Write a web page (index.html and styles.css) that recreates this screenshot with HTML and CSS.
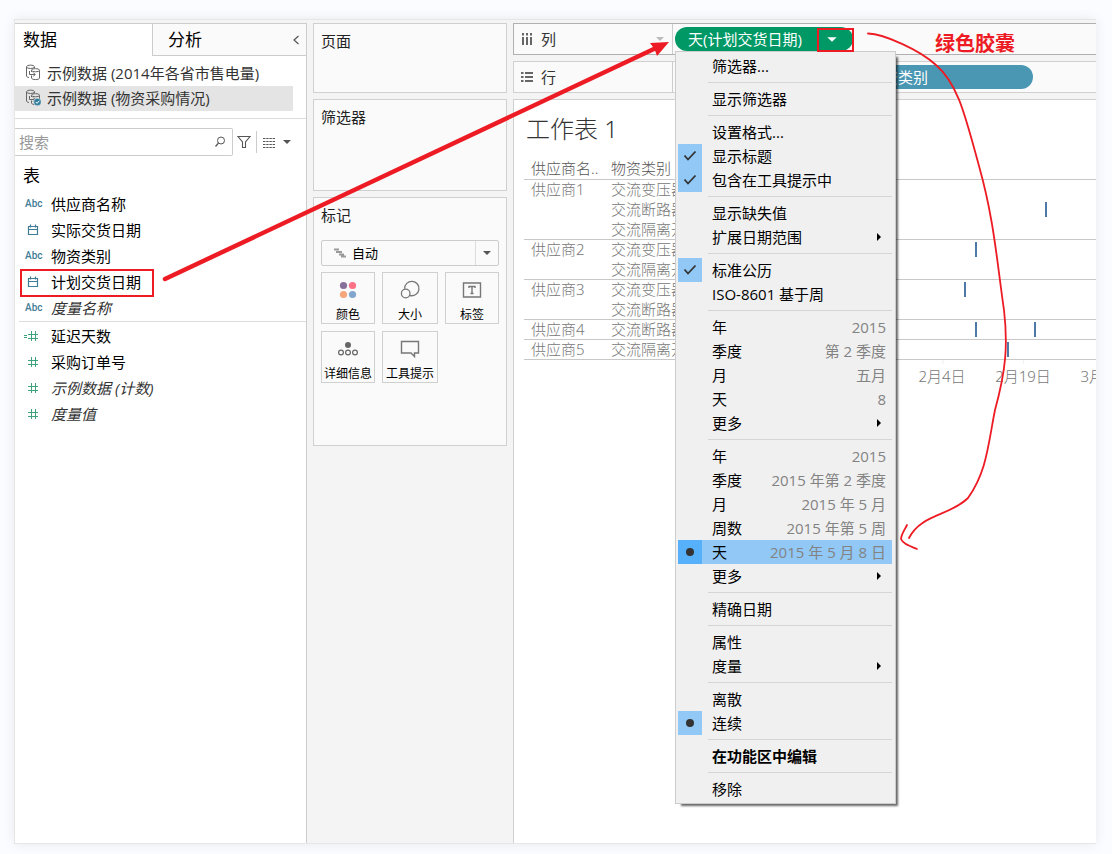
FILE: index.html
```html
<!DOCTYPE html>
<html lang="zh-CN">
<head>
<meta charset="utf-8">
<meta name="viewport" content="width=device-width, initial-scale=1">
<title>工作表 1</title>
<link rel="stylesheet" href="styles.css">
</head>
<body>
<svg class="sprite" aria-hidden="true">
  <symbol id="cal" viewBox="0 0 16 16"><path d="M3.500 4.500h9v8h-9zM3 7.500h10M5.500 2.500v3M10.500 2.500v3" fill="none" stroke="#3f7d97" stroke-width="1.200"/></symbol>
  <symbol id="hash" viewBox="0 0 16 16"><path d="M3 6.500h10M3 10.500h10M6.500 3v10M10.500 3v10" fill="none" stroke="#3fa27c"/></symbol>
  <symbol id="db" viewBox="0 0 16 17">
    <g fill="none" stroke="#666">
      <path d="M4 13.500C2.500 13.200 1.500 12.700 1.500 12V3M9.500 3v1"/>
      <ellipse cx="5.500" cy="2.800" rx="4" ry="1.700"/>
      <path d="M6.500 11.500V14c0 .9 1.800 1.600 4 1.600s4-.7 4-1.600V6.500M6.500 6.500v1.500"/>
      <ellipse cx="10.500" cy="6.200" rx="4" ry="1.600"/>
      <path d="M4.500 7v3.500h5.500M8.200 8.500l2 2-2 2"/>
    </g>
  </symbol>
  <symbol id="check" viewBox="0 0 24 24"><path d="M6.500 11.500l3.500 4 7.500-8" fill="none" stroke="#333" stroke-width="1.800"/></symbol>
  <symbol id="dot" viewBox="0 0 24 24"><circle cx="12" cy="12" r="4" fill="#333"/></symbol>
  <symbol id="sub" viewBox="0 0 6 10"><path d="M1 1l4 4-4 4z"/></symbol>
  <symbol id="down" viewBox="0 0 10 6"><path d="M1 1h8L5 5z"/></symbol>
</svg>

<div class="app">
  <aside class="data-pane">
    <div class="tabs" role="tablist">
      <button class="tab active" role="tab" aria-selected="true">数据</button>
      <button class="tab" role="tab" aria-selected="false">分析
        <svg class="collapse" viewBox="0 0 8 10"><path d="M6.500 1L2 5l4.500 4" fill="none" stroke="#555" stroke-width="1.200"/></svg>
      </button>
    </div>
    <div class="sources">
      <button class="source"><svg class="source-icon"><use href="#db"/></svg>示例数据 (2014年各省市售电量)</button>
      <button class="source selected"><svg class="source-icon" viewBox="0 0 16 17"><use href="#db" width="16" height="17"/><circle cx="12.500" cy="13" r="3.800" fill="#337f9f" stroke="#e4e4e4" stroke-width=".6"/><path d="M10.800 13l1.300 1.300 2.200-2.600" stroke="#fff" fill="none"/></svg>示例数据 (物资采购情况)</button>
    </div>
    <div class="search-row">
      <label class="search">
        <input class="search-input" type="text" placeholder="搜索" aria-label="搜索">
        <svg class="search-icon" viewBox="0 0 12 12"><circle cx="7" cy="4.500" r="3.500" fill="none" stroke="#555"/><path d="M4.500 7L1.500 10.500" stroke="#555" stroke-width="1.200"/></svg>
      </label>
      <button class="tool filter" aria-label="筛选"><svg viewBox="0 0 14 14"><path d="M1 1.500h12L8.500 7v5.500h-3V7z" fill="none" stroke="#555" stroke-width="1.100"/></svg></button>
      <button class="tool view" aria-label="视图">
        <svg class="grid-icon" viewBox="0 0 12 11"><path d="M0 1.500h12M0 4.500h12M0 7.500h12M0 10.500h12" stroke="#555" stroke-dasharray="2.400 .8"/></svg>
        <svg class="caret"><use href="#down"/></svg>
      </button>
    </div>
    <h2 class="group-title">表</h2>
    <ul class="fields">
      <li class="field"><span class="abc">Abc</span>供应商名称</li>
      <li class="field"><svg class="field-icon"><use href="#cal"/></svg>实际交货日期</li>
      <li class="field"><span class="abc">Abc</span>物资类别</li>
      <li class="field"><svg class="field-icon"><use href="#cal"/></svg>计划交货日期</li>
      <li class="field"><span class="abc">Abc</span><i class="generated">度量名称</i></li>
    </ul>
    <ul class="fields measures">
      <li class="field"><svg class="field-icon" viewBox="0 0 16 16"><path d="M3 6.500h10M3 10.500h10M6.500 3v10M10.500 3v10M-1 7.500h3M-1 9.500h3" fill="none" stroke="#3fa27c"/></svg>延迟天数</li>
      <li class="field"><svg class="field-icon"><use href="#hash"/></svg>采购订单号</li>
      <li class="field"><svg class="field-icon"><use href="#hash"/></svg><i class="generated">示例数据 (计数)</i></li>
      <li class="field"><svg class="field-icon"><use href="#hash"/></svg><i class="generated">度量值</i></li>
    </ul>
  </aside>

  <section class="cards">
    <div class="card pages"><h3 class="card-title">页面</h3></div>
    <div class="card filters"><h3 class="card-title">筛选器</h3></div>
    <div class="card marks">
      <h3 class="card-title">标记</h3>
      <div class="mark-type">
        <svg class="mark-type-icon" viewBox="0 0 12 10"><path d="M0 1.500h5M2 4h6M5 6.500h5M7 8.500h5" stroke="#999" stroke-width="1.800"/></svg>
        <select class="mark-select" aria-label="标记类型"><option>自动</option></select>
        <svg class="caret mark-caret"><use href="#down"/></svg>
      </div>
      <div class="mark-grid">
        <button class="mark"><svg class="mark-icon" viewBox="0 0 22 22"><circle cx="6.500" cy="6.500" r="3.600" fill="#86719b"/><circle cx="15.500" cy="6.500" r="3.600" fill="#fb7185"/><circle cx="6.500" cy="15.500" r="3.600" fill="#f5a67b"/><circle cx="15.500" cy="15.500" r="3.600" fill="#83a6ce"/></svg>颜色</button>
        <button class="mark"><svg class="mark-icon" viewBox="0 0 22 22"><g fill="none" stroke="#777" stroke-width="1.300"><path d="M5.600 9.800a7.200 7.200 0 1 1 5.400 6.700"/><circle cx="6.700" cy="14.500" r="4.300"/></g></svg>大小</button>
        <button class="mark"><svg class="mark-icon" viewBox="0 0 22 22"><path d="M2.500 4h17v14h-17z" fill="none" stroke="#777" stroke-width="1.400"/><path d="M8 9V7.500h6V9M11 7.500v7M9.500 14.500h3" fill="none" stroke="#777" stroke-width="1.400"/></svg>标签</button>
        <button class="mark"><svg class="mark-icon" viewBox="0 0 22 22"><circle cx="11" cy="7" r="3" fill="#666"/><g fill="none" stroke="#666" stroke-width="1.200"><circle cx="4" cy="14.500" r="2.400"/><circle cx="11" cy="14.500" r="2.400"/><circle cx="18" cy="14.500" r="2.400"/></g></svg>详细信息</button>
        <button class="mark"><svg class="mark-icon" viewBox="0 0 22 22"><path d="M2.500 3.500h17v11.500h-4v3.500L12 15H2.500z" fill="none" stroke="#777" stroke-width="1.400"/></svg>工具提示</button>
      </div>
    </div>
  </section>

  <main class="view-pane">
    <div class="shelf active-shelf">
      <div class="shelf-head">
        <svg class="shelf-icon" viewBox="0 0 12 12"><path d="M2 4v8M6 4v8M10 4v8M2 0v2.500M6 0v2.500M10 0v2.500" stroke="#666" stroke-width="2"/></svg>列
        <svg class="caret shelf-caret"><use href="#down"/></svg>
      </div>
      <div class="pills">
        <div class="pill-anchor">
          <button class="pill green">天(计划交货日期)<svg class="pill-caret"><use href="#down"/></svg></button>
          <div class="menu" role="menu">
            <button class="item" role="menuitem">筛选器...</button>
            <hr class="sep">
            <button class="item" role="menuitem">显示筛选器</button>
            <hr class="sep">
            <button class="item" role="menuitem">设置格式...</button>
            <button class="item" role="menuitem"><svg class="state"><use href="#check"/></svg>显示标题</button>
            <button class="item" role="menuitem"><svg class="state"><use href="#check"/></svg>包含在工具提示中</button>
            <hr class="sep">
            <button class="item" role="menuitem">显示缺失值</button>
            <button class="item" role="menuitem">扩展日期范围<svg class="sub"><use href="#sub"/></svg></button>
            <hr class="sep">
            <button class="item" role="menuitem"><svg class="state"><use href="#check"/></svg>标准公历</button>
            <button class="item" role="menuitem">ISO-8601 基于周</button>
            <hr class="sep">
            <button class="item" role="menuitem">年<span class="hint">2015</span></button>
            <button class="item" role="menuitem">季度<span class="hint">第 2 季度</span></button>
            <button class="item" role="menuitem">月<span class="hint">五月</span></button>
            <button class="item" role="menuitem">天<span class="hint">8</span></button>
            <button class="item" role="menuitem">更多<svg class="sub"><use href="#sub"/></svg></button>
            <hr class="sep">
            <button class="item" role="menuitem">年<span class="hint">2015</span></button>
            <button class="item" role="menuitem">季度<span class="hint">2015 年第 2 季度</span></button>
            <button class="item" role="menuitem">月<span class="hint">2015 年 5 月</span></button>
            <button class="item" role="menuitem">周数<span class="hint">2015 年第 5 周</span></button>
            <button class="item current" role="menuitem"><svg class="state"><use href="#dot"/></svg>天<span class="hint">2015 年 5 月 8 日</span></button>
            <button class="item" role="menuitem">更多<svg class="sub"><use href="#sub"/></svg></button>
            <hr class="sep">
            <button class="item" role="menuitem">精确日期</button>
            <hr class="sep">
            <button class="item" role="menuitem">属性</button>
            <button class="item" role="menuitem">度量<svg class="sub"><use href="#sub"/></svg></button>
            <hr class="sep">
            <button class="item" role="menuitem">离散</button>
            <button class="item" role="menuitem"><svg class="state"><use href="#dot"/></svg>连续</button>
            <hr class="sep">
            <button class="item strong" role="menuitem">在功能区中编辑</button>
            <hr class="sep">
            <button class="item" role="menuitem">移除</button>
          </div>
        </div>
      </div>
    </div>
    <div class="shelf">
      <div class="shelf-head">
        <svg class="shelf-icon" viewBox="0 0 12 12"><path d="M4 2h8M4 6h8M4 10h8M0 2h2.500M0 6h2.500M0 10h2.500" stroke="#666" stroke-width="1.800"/></svg>行
      </div>
      <div class="pills rows-pills">
        <button class="pill blue">物资类别</button>
      </div>
    </div>
    <div class="sheet">
      <h1 class="sheet-title">工作表 1</h1>
      <table class="viz">
        <colgroup><col class="col-supplier"><col class="col-category"><col></colgroup>
        <thead><tr><th>供应商名..</th><th>物资类别</th><th></th></tr></thead>
        <tbody>
          <tr><td rowspan="3" class="end">供应商1</td><td>交流变压器</td><td class="plot"></td></tr>
          <tr><td>交流断路器</td><td class="plot"><span class="tick" style="left:341px"></span></td></tr>
          <tr><td class="end">交流隔离开关</td><td class="plot end"></td></tr>
          <tr><td rowspan="2" class="end">供应商2</td><td>交流变压器</td><td class="plot"><span class="tick" style="left:271px"></span></td></tr>
          <tr><td class="end">交流隔离开关</td><td class="plot end"></td></tr>
          <tr><td rowspan="2" class="end">供应商3</td><td>交流变压器</td><td class="plot"><span class="tick" style="left:260px"></span></td></tr>
          <tr><td class="end">交流断路器</td><td class="plot end"></td></tr>
          <tr><td class="end">供应商4</td><td class="end">交流断路器</td><td class="plot end"><span class="tick" style="left:271px"></span><span class="tick" style="left:330px"></span></td></tr>
          <tr><td class="end">供应商5</td><td class="end">交流隔离开关</td><td class="plot end"><span class="tick" style="left:303px"></span></td></tr>
        </tbody>
        <tfoot><tr><td colspan="2"></td><td class="plot axis">
          <span class="axis-label" style="left:238px">2月4日</span>
          <span class="axis-label" style="left:319px">2月19日</span>
          <span class="axis-label" style="left:400px">3月6日</span>
        </td></tr></tfoot>
      </table>
    </div>
  </main>
</div>

<div class="notes">
  <svg class="note-lines" viewBox="0 0 1112 854" fill="none" stroke="#ed1c24">
    <rect x="21" y="270" width="132" height="26" stroke-width="2"/>
    <rect x="818" y="29" width="35" height="22" stroke-width="2"/>
    <path d="M165 279L656 48" stroke-width="4.500" stroke-linecap="round"/>
    <path d="M669 42l-19 1 4.500 6 2.500 7z" fill="#ed1c24" stroke="none"/>
    <path d="M868 33.500C884 34 920 50 936 65C958 84 965 115 979 166C994 219 997 262 1004 310C1008 345 1006 370 995 410C988 445 987 471 968 498C950 516 921 514 909 538" stroke-width="1.800" stroke-linecap="round"/>
    <path d="M907 525C904 531 901 535 901 539C903 544 910 546 917 549" stroke-width="1.800" stroke-linecap="round"/>
  </svg>
  <strong class="note-text">绿色胶囊</strong>
</div>
</body>
</html>
```

FILE: styles.css
```css
* { box-sizing: border-box; }

body {
  margin: 0;
  padding: 19px 16px 10px 14px;
  min-height: 100vh;
  display: flex;
  position: relative;
  overflow: hidden;
  background: #fbfcff;
  color: #000;
  font: 15px/24px "Open Sans", "Noto Sans CJK SC", sans-serif;
}

button, input, select { font: inherit; color: inherit; }
button { border: 0; padding: 0; background: none; text-align: left; white-space: nowrap; }
h1, h2, h3, ul { margin: 0; padding: 0; font-weight: 400; list-style: none; }
svg { display: block; flex: none; }
.sprite { position: absolute; width: 0; height: 0; }

.app {
  flex: 1;
  min-width: 0;
  display: flex;
  padding-top: 3px;
  background: #f4f4f4;
  border: 1px solid #e6e6e6;
  border-right: 0;
  box-shadow: 0 0 12px rgba(0, 0, 0, .08);
}

.caret { width: 10px; height: 6px; fill: #555; }

/* Data pane */
.data-pane {
  width: 292px;
  flex: none;
  background: #fff;
  border-top: 1px solid #ccc;
  border-right: 1px solid #ccc;
}
.tabs { display: flex; height: 32px; font-size: 17px; }
.tab { width: 137px; padding-left: 8px; }
.tab:not(.active) {
  flex: 1;
  display: flex;
  align-items: center;
  padding: 0 6px 0 15px;
  background: #fafafa;
  border-left: 1px solid #ccc;
  border-bottom: 1px solid #ccc;
}
.collapse { width: 8px; height: 10px; margin-left: auto; }
.sources { padding: 5px 13px 7px 0; border-bottom: 1px solid #ddd; }
.source {
  display: flex;
  align-items: center;
  gap: 6px;
  width: 100%;
  height: 25px;
  padding: 0 0 2px 10px;
  color: #333;
}
.source.selected { background: #e4e4e4; }
.source-icon { width: 16px; height: 17px; }

.search-row { display: flex; align-items: center; margin-top: 9px; height: 28px; }
.search {
  display: flex;
  align-items: center;
  width: 218px;
  height: 28px;
  padding-right: 6px;
  border: 1px solid #ccc;
  border-left: 0;
  border-radius: 0 2px 2px 0;
}
.search-input { flex: 1; min-width: 0; height: 26px; padding: 0 4px; border: 0; background: none; outline: 0; }
.search-input::placeholder { color: #999; opacity: 1; }
.search-icon { width: 12px; height: 12px; }
.tool { display: flex; align-items: center; height: 22px; }
.filter { width: 24px; padding-left: 4px; border-right: 1px solid #ccc; }
.filter svg { width: 14px; height: 14px; }
.view { gap: 7px; padding-left: 6px; }
.grid-icon { width: 12px; height: 11px; }

.group-title { margin-top: 5px; padding-left: 8px; font-size: 17px; line-height: 30px; }
.field { display: flex; align-items: center; gap: 10px; height: 26px; padding-left: 10px; }
.field-icon { width: 16px; height: 16px; overflow: visible; }
.abc { width: 16px; color: #3f7d97; font: 500 10px/16px Roboto, sans-serif; white-space: nowrap; }
.generated { color: #333; }
.measures { margin-left: 4px; padding-top: 1px; border-top: 1px solid #ddd; }
.measures .field { padding-left: 6px; }

/* Cards */
.cards { width: 206px; flex: none; padding: 0 6px; display: flex; flex-direction: column; gap: 6px; }
.card { padding: 5px 7px; background: #fafafa; border: 1px solid #d0d0d0; }
.card-title { color: #222; font-size: 15px; line-height: 24px; }
.pages { height: 70px; }
.filters { height: 92px; }
.marks { min-height: 249px; }
.mark-type {
  display: flex;
  align-items: center;
  height: 26px;
  margin: 13px 0 6px;
  padding-left: 12px;
  border: 1px solid #ccc;
  border-radius: 2px;
}
.mark-type-icon { width: 12px; height: 10px; }
.mark-select {
  flex: 1;
  height: 24px;
  padding: 0 0 0 6px;
  border: 0;
  border-right: 1px solid #ddd;
  appearance: none;
  background: none;
  font-size: 13px;
}
.mark-caret { margin: 0 6px; }
.mark-grid { display: grid; grid-template-columns: 54fr 56fr 54fr; gap: 7px; }
.mark {
  display: flex;
  flex-direction: column;
  align-items: center;
  gap: 2px;
  height: 52px;
  padding-top: 6px;
  border: 1px solid #d0d0d0;
  font-size: 12px;
  line-height: 24px;
}
.mark-icon { width: 22px; height: 22px; }

/* Shelves */
.view-pane { flex: 1; min-width: 0; display: flex; flex-direction: column; gap: 6px; }
.shelf { display: flex; height: 32px; background: #fafafa; border: 1px solid #d0d0d0; border-right: 0; }
.active-shelf { border-color: #b0b0b0; }
.shelf-head {
  width: 159px;
  flex: none;
  display: flex;
  align-items: center;
  gap: 8px;
  padding: 0 7px;
  border-right: 1px solid #ccc;
  color: #333;
}
.shelf-icon { width: 12px; height: 12px; }
.shelf-caret { margin-left: auto; fill: #bbb; }
.pills { display: flex; align-items: center; gap: 2px; padding-left: 2px; }
.rows-pills { padding-left: 182px; }
.pill-anchor { position: relative; z-index: 2; }
.pill {
  display: flex;
  align-items: center;
  width: 178px;
  height: 24px;
  padding: 0 15px 0 13px;
  border-radius: 12px;
  color: #fff;
}
.green { background: #009966; }
.blue { background: #4a97b4; }
.pill-caret { width: 12px; height: 7px; margin-left: auto; fill: #fff; }

/* Context menu */
.menu {
  position: absolute;
  top: 100%;
  left: 0;
  width: 221px;
  padding: 2px 3px 2px 2px;
  background: #f0f0f0;
  border: 1px solid #ccc;
  box-shadow: 4px 4px 2px -2px rgba(0, 0, 0, .6);
}
.item { position: relative; display: flex; align-items: center; width: 100%; height: 24px; padding: 0 6px 0 34px; }
.state { position: absolute; left: 0; top: 0; width: 24px; height: 24px; background: #91c8f6; }
.current { background: #91c8f6; }
.current .state { background: #56b0fa; }
.hint { margin-left: auto; color: #838383; }
.sub { width: 6px; height: 10px; margin: 0 4px 0 auto; }
.strong { font-weight: 700; }
.sep { height: 1px; margin: 4px 0 4px 30px; border: 0; background: #d5d5d5; }

/* Worksheet */
.sheet {
  flex: 1;
  overflow: hidden;
  padding: 10px 0 0 10px;
  background: #fff;
  border: 1px solid #d0d0d0;
  border-width: 1px 0 0 1px;
  font-family: "Noto Sans", "Noto Sans CJK SC", sans-serif;
  font-weight: 300;
}
.sheet-title { padding-left: 2px; color: #333; font-size: 24px; font-weight: 300; line-height: 38px; }
.viz { width: 100%; table-layout: fixed; border-collapse: separate; border-spacing: 0; line-height: 19px; }
.col-supplier { width: 80px; }
.col-category { width: 100px; }
.viz th, .viz td { height: 20px; padding: 0 0 0 7px; text-align: left; vertical-align: top; white-space: nowrap; font-weight: 300; color: #777; }
.viz th { height: 32px; padding-top: 11px; color: #555; border-bottom: 1px solid #c8c8c8; }
.viz .end { border-bottom: 1px solid #c8c8c8; }
.viz .plot { position: relative; padding: 0; }
.tick { position: absolute; top: 2px; width: 2px; height: 15px; background: #4e79a7; }
.viz .axis { height: 30px; }
.axis-label { position: absolute; top: 7px; transform: translateX(-50%); }
.axis-label::before { content: ""; position: absolute; left: 50%; top: -7px; height: 4px; border-left: 1px solid #eee; }

/* Annotations drawn over the workspace */
.notes { position: absolute; top: 0; left: 0; z-index: 5; width: 1112px; pointer-events: none; color: #ed1c24; }
.note-lines { width: 1112px; height: 854px; }
.note-text { position: absolute; left: 935px; top: 30px; font-size: 20px; line-height: 28px; }
```
